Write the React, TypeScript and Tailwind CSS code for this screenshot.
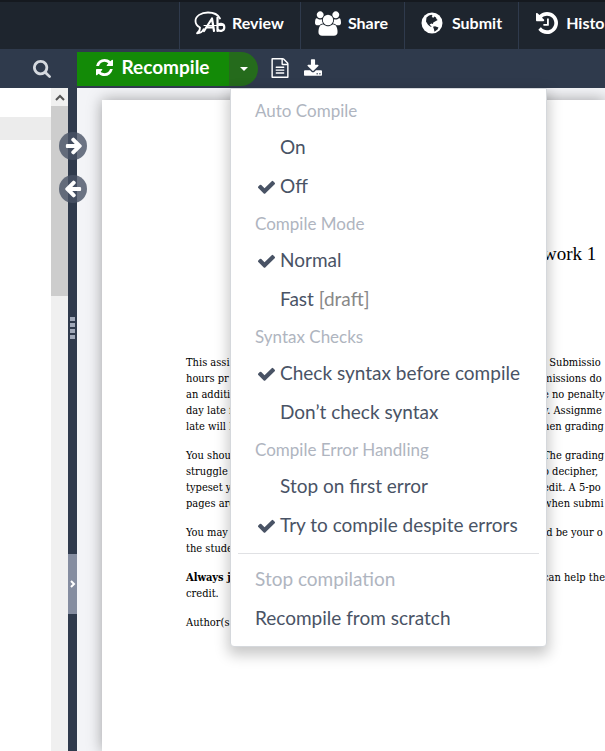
import type { ReactNode } from 'react'

const paths = {
  refresh: 'M1511 1056q0 5-1 7-64 268-268 434.5t-478 166.5q-146 0-282.5-55t-243.5-157l-129 129q-19 19-45 19t-45-19-19-45v-448q0-26 19-45t45-19h448q26 0 45 19t19 45-19 45l-137 137q71 66 161 102t187 36q134 0 250-65t186-179q11-17 53-117 8-23 30-23h192q13 0 22.5 9.5t9.5 22.5zm25-800v448q0 26-19 45t-45 19h-448q-26 0-45-19t-19-45 19-45l138-138q-148-137-349-137-134 0-250 65t-186 179q-11 17-53 117-8 23-30 23h-199q-13 0-22.5-9.5t-9.5-22.5v-7q65-268 270-434.5t480-166.5q146 0 284 55.5t245 156.5l130-129q19-19 45-19t45 19 19 45z',
  check: 'M1671 566q0 40-28 68l-724 724-136 136q-28 28-68 28t-68-28l-136-136-362-362q-28-28-28-68t28-68l136-136q28-28 68-28t68 28l294 295 656-657q28-28 68-28t68 28l136 136q28 28 28 68z',
  search: 'M1216 832q0-185-131.5-316.5t-316.5-131.5-316.5 131.5-131.5 316.5 131.5 316.5 316.5 131.5 316.5-131.5 131.5-316.5zm512 832q0 52-38 90t-90 38q-54 0-90-38l-343-342q-179 124-399 124-143 0-273.5-55.5t-225-150-150-225-55.5-273.5 55.5-273.5 150-225 225-150 273.5-55.5 273.5 55.5 225 150 150 225 55.5 273.5q0 220-124 399l343 343q37 37 37 90z',
  history: 'M1664 896q0 156-61 298t-164 245-245 164-298 61q-172 0-327-72.5t-264-204.5q-7-10-6.5-22.5t8.5-20.5l137-138q10-9 25-9 16 2 23 12 73 95 179 147t225 52q104 0 198.5-40.5t163.5-109.5 109.5-163.5 40.5-198.5-40.5-198.5-109.5-163.5-163.5-109.5-198.5-40.5q-98 0-188 35.5t-160 101.5l137 138q31 30 14 69-17 40-59 40h-448q-26 0-45-19t-19-45v-448q0-42 40-59 39-17 69 14l130 129q107-101 244.5-156.5t284.5-55.5q156 0 298 61t245 164 164 245 61 298zm-640-288v448q0 14-9 23t-23 9h-320q-14 0-23-9t-9-23v-64q0-14 9-23t23-9h224v-352q0-14 9-23t23-9h64q14 0 23 9t9 23z',
  group: 'M593 896q-162 5-265 128h-134q-82 0-138-40.5t-56-118.5q0-353 124-353 6 0 43.5 21t97.5 42.5 119 21.5q67 0 133-23-5 37-5 66 0 139 81 256zm1071 637q0 120-73 189.5t-194 69.5h-874q-121 0-194-69.5t-73-189.5q0-53 3.5-103.5t14-109 26.5-108.5 43-97.5 62-81 85.5-53.5 111.5-20q10 0 43 21.5t73 48 107 48 135 21.5 135-21.5 107-48 73-48 43-21.5q61 0 111.5 20t85.5 53.5 62 81 43 97.5 26.5 108.5 14 109 3.5 103.5zm-1024-1277q0 106-75 181t-181 75-181-75-75-181 75-181 181-75 181 75 75 181zm704 384q0 159-112.5 271.5t-271.5 112.5-271.5-112.5-112.5-271.5 112.5-271.5 271.5-112.5 271.5 112.5 112.5 271.5zm576 225q0 78-56 118.5t-138 40.5h-134q-103-123-265-128 81-117 81-256 0-29-5-66 66 23 133 23 59 0 119-21.5t97.5-42.5 43.5-21q124 0 124 353zm-128-609q0 106-75 181t-181 75-181-75-75-181 75-181 181-75 181 75 75 181z',
  file: 'M1596 380q28 28 48 76t20 88v1152q0 40-28 68t-68 28h-1344q-40 0-68-28t-28-68v-1600q0-40 28-68t68-28h896q40 0 88 20t76 48zm-444-244v376h376q-10-29-22-41l-313-313q-12-12-41-22zm384 1528v-1024h-416q-40 0-68-28t-28-68v-416h-768v1536h1280zm-1024-864q0-14 9-23t23-9h704q14 0 23 9t9 23v64q0 14-9 23t-23 9h-704q-14 0-23-9t-9-23v-64zm736 224q14 0 23 9t9 23v64q0 14-9 23t-23 9h-704q-14 0-23-9t-9-23v-64q0-14 9-23t23-9h704zm0 256q14 0 23 9t9 23v64q0 14-9 23t-23 9h-704q-14 0-23-9t-9-23v-64q0-14 9-23t23-9h704z',
  download: 'M1344 1344q0-26-19-45t-45-19-45 19-19 45 19 45 45 19 45-19 19-45zm256 0q0-26-19-45t-45-19-45 19-19 45 19 45 45 19 45-19 19-45zm128-224v320q0 40-28 68t-68 28h-1472q-40 0-68-28t-28-68v-320q0-40 28-68t68-28h465l135 136q58 56 136 56t136-56l136-136h464q40 0 68 28t28 68zm-325-569q17 41-14 70l-448 448q-18 19-45 19t-45-19l-448-448q-31-29-14-70 17-39 59-39h256v-448q0-26 19-45t45-19h256q26 0 45 19t19 45v448h256q42 0 59 39z',
  arrow: 'M1600 960q0 54-37 91l-651 651q-39 37-91 37-51 0-90-37l-75-75q-38-38-38-91t38-91l293-293h-704q-52 0-84.5-37.5t-32.5-90.5v-128q0-53 32.5-90.5t84.5-37.5h704l-293-294q-38-36-38-90t38-90l75-75q38-38 90-38 53 0 91 38l651 651q37 35 37 90z',
}

function Icon({ name, box, className }: { name: keyof typeof paths; box: string; className: string }) {
  return (
    <svg viewBox={box} className={className} fill="currentColor" aria-hidden="true">
      <path d={paths[name]} />
    </svg>
  )
}

function ReviewIcon() {
  return (
    <svg viewBox="0 0 32 24" className="h-6 w-8" fill="none" stroke="currentColor" strokeLinecap="round" strokeLinejoin="round" aria-hidden="true">
      <path strokeWidth="1.8" d="M26 7.500C24 3.500 19.500 1.500 14 1.500C7 1.500 1.500 5 1.500 10c0 3 1.500 5 4.500 6.500C6 19.500 5 21 3 22.300c3.500-.3 5.500-1.800 6.500-4" />
      <path strokeWidth="2.200" d="M10 20L18 7.500L20 20M13 16.300h6" />
      <path strokeWidth="2.200" d="M23.500 6.500V20M23.500 15c1-3 6.800-3 6.800 1.300s-5.500 4.500-6.800 1.700" />
      <path strokeWidth="1" d="M10 14.500h20" />
    </svg>
  )
}

function GlobeIcon() {
  return (
    <svg viewBox="0 0 22 22" className="size-[22px]" aria-hidden="true">
      <circle cx="11" cy="11" r="10.500" fill="#fff" />
      <path fill="#1e252e" d="M5.500 5.500L8 3.500l2.500-.8 1 1-.8 1.300 1.800.8.8-1.300 1.700 1 .5 1.500 1.200 1-2.200 1.200-2.200 1.300-.4 1.600-1.500-.6-1.800 1 1.400 1.600.8 1-1.600-.6-2.200-1.800L5 9.500zM12 14.800l2-.6 3.500 1.400-1 1.900-3 2.200-.6-2.700z" />
    </svg>
  )
}

function NavItem({ icon, label }: { icon: ReactNode; label: string }) {
  return (
    <button type="button" className="flex shrink-0 items-center gap-[6px] border-l border-[#2f3a4c] pr-4 pb-[5px] pl-[14px] text-base font-bold text-white">
      <span className="flex min-w-[27px] justify-center">{icon}</span>
      {label}
    </button>
  )
}

const groups = [
  { title: 'Auto Compile', options: ['On', 'Off'], selected: 1 },
  { title: 'Compile Mode', options: ['Normal', 'Fast'], selected: 0 },
  { title: 'Syntax Checks', options: ['Check syntax before compile', 'Don’t check syntax'], selected: 0 },
  { title: 'Compile Error Handling', options: ['Stop on first error', 'Try to compile despite errors'], selected: 1 },
]

function CompileMenu() {
  return (
    <div role="menu" className="absolute top-[39px] left-[153px] z-20 w-[317px] rounded-b border border-[#d5d8dc] bg-white pt-[5px] pb-2 text-[19px] text-[#495365] shadow-[0_6px_14px_2px_rgba(0,0,0,0.22)]">
      <div className="flex flex-col gap-px">
        {groups.map((g) => (
          <div key={g.title} role="group" aria-label={g.title}>
            <div className="flex h-[34px] items-center px-6 text-[17px] text-[#afb5c0]">{g.title}</div>
            {g.options.map((o, i) => (
              <button key={o} type="button" role="menuitemradio" aria-checked={i === g.selected} className="flex h-[39px] w-full items-center pl-[27px] whitespace-nowrap">
                <span className="flex w-[22px] items-center">
                  {i === g.selected && <Icon name="check" box="121 0 1550 1792" className="h-5 w-[17px]" />}
                </span>
                <span>
                  {o}
                  {o === 'Fast' && <span className="text-[#888]"> [draft]</span>}
                </span>
              </button>
            ))}
          </div>
        ))}
      </div>
      <hr className="mx-[7px] mt-2 mb-[6px] border-[#e0e1e4]" />
      <button type="button" role="menuitem" disabled className="flex h-[39px] w-full items-center px-6 text-[#afb5c0]">Stop compilation</button>
      <button type="button" role="menuitem" className="flex h-[39px] w-full items-center px-6">Recompile from scratch</button>
    </div>
  )
}

const paragraphs = [
  [
    ['This assi', '. Submissio'],
    ['hours pr', 'missions do'],
    ['an additi', 'e no penalty'],
    ['day late f', 'y. Assignme'],
    ['late will b', 'hen grading'],
  ],
  [
    ['You shou', 'The grading'],
    ['struggle', 'o decipher,'],
    ['typeset y', 'edit. A 5-po'],
    ['pages are', 'when submi'],
  ],
  [
    ['You may', 'ld be your o'],
    ['the stude', ''],
  ],
  [
    ['Always j', 'can help the'],
    ['credit.', ''],
  ],
  [['Author(s', '']],
]

function Page() {
  return (
    <article className="mt-3 ml-[25px] min-w-0 flex-1 bg-white pl-[84px] font-['DejaVu_Serif_Condensed','DejaVu_Serif',serif] text-[11px] leading-4 text-black shadow-[0_0_14px_rgba(0,0,0,0.35)]">
      <h1 className="mt-[142px] pl-[357px] font-['Liberation_Serif',serif] text-[19px] leading-6 whitespace-nowrap">work 1</h1>
      <div className="mt-[89px] flex flex-col gap-[13px]">
        {paragraphs.map((lines) => (
          <div key={lines[0][0]}>
            {lines.map(([start, end]) => (
              <div key={start} className="flex whitespace-nowrap">
                <span className={start.startsWith('Always') ? 'w-[357px] shrink-0 font-bold' : 'w-[357px] shrink-0'}>{start}</span>
                <span>{end}</span>
              </div>
            ))}
          </div>
        ))}
      </div>
    </article>
  )
}

export default function App() {
  return (
    <div className="flex h-screen flex-col overflow-hidden bg-[#2f3a4c] font-['Lato',sans-serif]">
      <nav className="flex h-[49px] shrink-0 justify-start overflow-hidden border-t-2 border-[#15191f] bg-[#1e252e] pl-[179px]">
        <NavItem icon={<ReviewIcon />} label="Review" />
        <NavItem icon={<Icon name="group" box="0 0 1920 1792" className="h-[25px] w-[26px]" />} label="Share" />
        <NavItem icon={<GlobeIcon />} label="Submit" />
        <NavItem icon={<Icon name="history" box="128 128 1536 1536" className="size-[22px]" />} label="History" />
      </nav>
      <div className="flex min-h-0 flex-1">
        <aside className="flex w-[68px] shrink-0 flex-col">
          <div className="flex h-[39px] shrink-0 items-center justify-end pr-[17px]">
            <button type="button" aria-label="Search" className="text-[#d5d9df]">
              <Icon name="search" box="64 128 1664 1664" className="size-[18px]" />
            </button>
          </div>
          <div className="flex min-h-0 flex-1 bg-white">
            <div className="flex-1 pt-[29px]">
              <div className="h-[23px] bg-[#ececec]" />
            </div>
            <div className="w-[17px] bg-[#f0f0f0]">
              <div className="flex h-[18px] items-center justify-center">
                <svg viewBox="0 0 10 7" className="h-[7px] w-[10px]" fill="none" stroke="#555" strokeWidth="2" aria-hidden="true">
                  <path d="M1 6l4-4 4 4" />
                </svg>
              </div>
              <div className="h-[190px] bg-[#cdcdcd]" />
            </div>
          </div>
        </aside>
        <div className="relative z-10 w-[9px] shrink-0 bg-[#2f3a4c]">
          <div className="absolute top-[83px] left-[-9px] flex flex-col gap-[15px] text-white">
            <button type="button" aria-label="Go to PDF location" className="flex size-7 items-center justify-center rounded-full bg-[#495365]/80">
              <Icon name="arrow" box="64 128 1536 1664" className="h-[18px] w-[17px]" />
            </button>
            <button type="button" aria-label="Go to code location" className="flex size-7 items-center justify-center rounded-full bg-[#495365]/80">
              <Icon name="arrow" box="64 128 1536 1664" className="h-[18px] w-[17px] rotate-180" />
            </button>
          </div>
          <div className="flex flex-col items-center gap-[2px] pt-[268px]">
            <i className="h-1 w-[5px] bg-[#a0a8b8]" />
            <i className="h-1 w-[5px] bg-[#a0a8b8]" />
            <i className="h-1 w-[5px] bg-[#a0a8b8]" />
            <i className="h-1 w-[5px] bg-[#a0a8b8]" />
          </div>
          <button type="button" aria-label="Toggle pane" className="mt-[215px] flex h-[60px] w-full items-center justify-center bg-[#858da0]">
            <svg viewBox="0 0 6 8" className="h-2 w-[6px]" fill="none" stroke="#fff" strokeWidth="2" aria-hidden="true">
              <path d="M1 1l3 3-3 3" />
            </svg>
          </button>
        </div>
        <main className="relative flex min-w-0 flex-1 flex-col">
          <div className="flex h-[39px] shrink-0 items-start pt-[3px] text-white">
            <button type="button" className="flex h-[34px] w-[152px] items-center justify-center gap-2 bg-[#138a07] pb-[3px] text-[19px] font-bold">
              <Icon name="refresh" box="0 128 1536 1536" className="size-[17px]" />
              Recompile
            </button>
            <button type="button" aria-label="Toggle compile options menu" aria-expanded="true" className="flex h-[34px] w-[29px] items-center justify-center rounded-r-full bg-[#256b1c]">
              <svg viewBox="0 0 8 4" className="h-1 w-2" fill="currentColor" aria-hidden="true">
                <path d="M0 0h8L4 4z" />
              </svg>
            </button>
            <div className="flex h-[34px] items-center gap-[15px] pb-[3px] pl-[13px]">
              <button type="button" aria-label="Logs and output files">
                <Icon name="file" box="128 0 1536 1792" className="h-5 w-[18px]" />
              </button>
              <button type="button" aria-label="Download PDF">
                <Icon name="download" box="64 0 1664 1536" className="h-[17px] w-[18px]" />
              </button>
            </div>
          </div>
          <div className="flex min-h-0 flex-1 overflow-hidden bg-[#f3f4f7]">
            <Page />
          </div>
          <CompileMenu />
        </main>
      </div>
    </div>
  )
}
